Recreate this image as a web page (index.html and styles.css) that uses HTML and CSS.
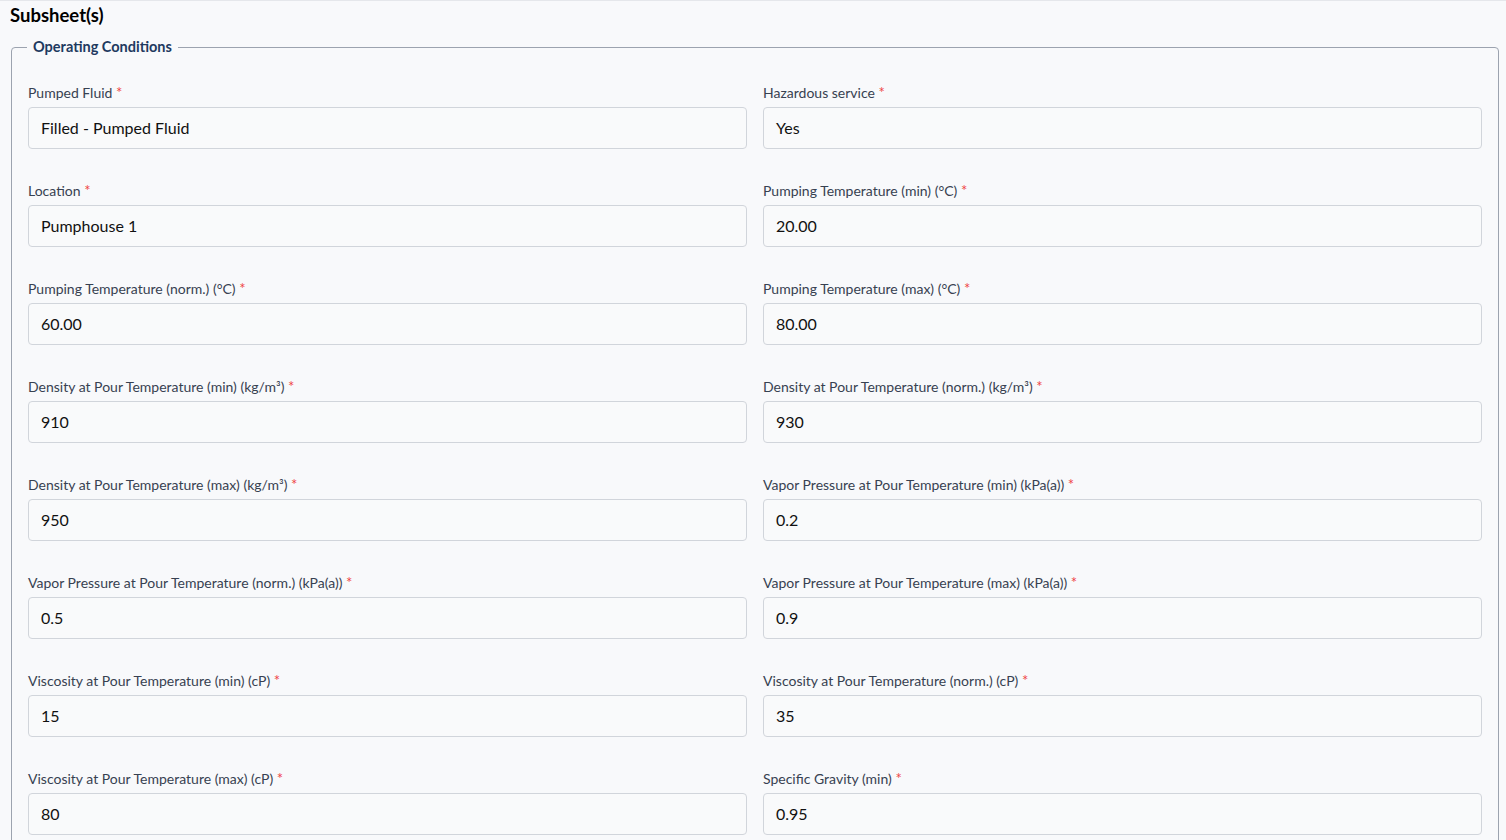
FILE: index.html
```html
<!DOCTYPE html>
<html>
<head>
<meta charset="utf-8">
<link rel="stylesheet" href="styles.css">
</head>
<body>
<div class="page">
  <h2 class="title">Subsheet(s)</h2>
  <fieldset class="group">
    <legend class="legend">Operating Conditions</legend>
    <div class="grid">
      <div class="field"><label class="label">Pumped Fluid <span class="req">*</span></label><div class="input">Filled - Pumped Fluid</div></div>
      <div class="field"><label class="label">Hazardous service <span class="req">*</span></label><div class="input">Yes</div></div>
      <div class="field"><label class="label">Location <span class="req">*</span></label><div class="input">Pumphouse 1</div></div>
      <div class="field"><label class="label">Pumping Temperature (min) (°C) <span class="req">*</span></label><div class="input">20.00</div></div>
      <div class="field"><label class="label">Pumping Temperature (norm.) (°C) <span class="req">*</span></label><div class="input">60.00</div></div>
      <div class="field"><label class="label">Pumping Temperature (max) (°C) <span class="req">*</span></label><div class="input">80.00</div></div>
      <div class="field"><label class="label">Density at Pour Temperature (min) (kg/m³) <span class="req">*</span></label><div class="input">910</div></div>
      <div class="field"><label class="label">Density at Pour Temperature (norm.) (kg/m³) <span class="req">*</span></label><div class="input">930</div></div>
      <div class="field"><label class="label">Density at Pour Temperature (max) (kg/m³) <span class="req">*</span></label><div class="input">950</div></div>
      <div class="field"><label class="label">Vapor Pressure at Pour Temperature (min) (kPa(a)) <span class="req">*</span></label><div class="input">0.2</div></div>
      <div class="field"><label class="label">Vapor Pressure at Pour Temperature (norm.) (kPa(a)) <span class="req">*</span></label><div class="input">0.5</div></div>
      <div class="field"><label class="label">Vapor Pressure at Pour Temperature (max) (kPa(a)) <span class="req">*</span></label><div class="input">0.9</div></div>
      <div class="field"><label class="label">Viscosity at Pour Temperature (min) (cP) <span class="req">*</span></label><div class="input">15</div></div>
      <div class="field"><label class="label">Viscosity at Pour Temperature (norm.) (cP) <span class="req">*</span></label><div class="input">35</div></div>
      <div class="field"><label class="label">Viscosity at Pour Temperature (max) (cP) <span class="req">*</span></label><div class="input">80</div></div>
      <div class="field"><label class="label">Specific Gravity (min) <span class="req">*</span></label><div class="input">0.95</div></div>
    </div>
  </fieldset>
</div>
</body>
</html>
```
FILE: styles.css
```css
html, body {
  margin: 0;
  padding: 0;
  height: 100%;
  overflow: hidden;
  background: #f8f9fb;
}
body {
  font-family: "Lato", "Noto Sans", sans-serif;
  color: #111827;
}
.page {
  border-top: 1px solid #e5e7eb;
  padding: 0 7px 0 11px;
}
.title {
  margin: 0 0 0 -1px;
  padding: 3px 0 0 0;
  font-size: 18.5px;
  line-height: 22px;
  font-weight: 700;
  color: #000;
}
.group {
  margin: 11px 0 0 0;
  padding: 26px 16px 20px 16px;
  border: 1px solid #9ca3af;
  border-radius: 4px;
  min-width: 0;
}
.legend {
  margin-left: -1px;
  padding: 0 6px;
  font-size: 14.5px;
  font-weight: 700;
  color: #1e3a5f;
  line-height: 20px;
}
.grid {
  display: grid;
  grid-template-columns: 1fr 1fr;
  column-gap: 16px;
  row-gap: 32px;
}
.field {
  display: flex;
  flex-direction: column;
  gap: 4px;
}
.label {
  font-size: 14px;
  line-height: 20px;
  height: 20px;
  color: #374151;
}
.req {
  color: #ef4444;
  font-size: 15px;
  line-height: 1;
}
.input {
  height: 42px;
  box-sizing: border-box;
  border: 1px solid #d1d5db;
  border-radius: 4px;
  background: #f9fafb;
  padding: 0 12px 1px 12px;
  display: flex;
  align-items: center;
  font-size: 16px;
  color: #111;
}
```
